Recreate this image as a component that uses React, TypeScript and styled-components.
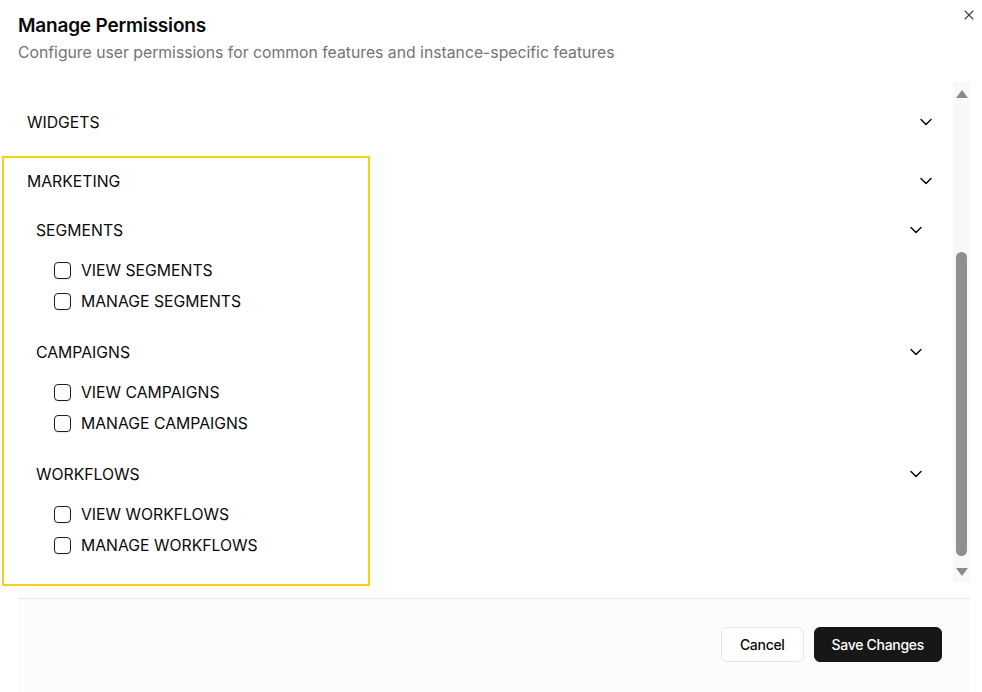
import styled, { createGlobalStyle } from "styled-components";
import { ChevronDown, X } from "lucide-react";

const GlobalStyle = createGlobalStyle`
  html, body {
    margin: 0;
    padding: 0;
    background: #ffffff;
  }
  body {
    font-family: Inter, "Noto Sans", "Liberation Sans", sans-serif;
    color: #0a0a0a;
  }
  * {
    box-sizing: border-box;
  }
`;

const Dialog = styled.div`
  position: relative;
  width: 982px;
  height: 692px;
  padding: 14px 12px 0 18px;
  display: flex;
  flex-direction: column;
  overflow: hidden;
`;

const Header = styled.div`
  display: flex;
  flex-direction: column;
  gap: 5px;
`;

const Title = styled.h2`
  margin: 0;
  font-size: 19px;
  line-height: 24px;
  font-weight: 600;
  letter-spacing: -0.2px;
`;

const Subtitle = styled.p`
  margin: 0;
  font-size: 15.75px;
  line-height: 20px;
  color: #737373;
`;

const CloseButton = styled.button`
  position: absolute;
  top: 6px;
  right: 4px;
  width: 18px;
  height: 18px;
  padding: 0;
  border: none;
  background: none;
  color: #404040;
  display: flex;
  align-items: center;
  justify-content: center;
  cursor: pointer;
`;

const ScrollArea = styled.div`
  margin-top: 19px;
  height: 500px;
  display: flex;
  flex-direction: row;
`;

const List = styled.div`
  flex: 1;
  padding-top: 20px;
  display: flex;
  flex-direction: column;
  gap: 19px;
  overflow: hidden;
`;

const Section = styled.div`
  display: flex;
  flex-direction: column;
`;

const Row = styled.div<{ $sub?: boolean }>`
  height: 40px;
  display: flex;
  align-items: center;
  justify-content: space-between;
  padding: ${(p) => (p.$sub ? "0 27px 0 18px" : "0 17px 0 9px")};
  font-size: 15.75px;
  color: #0a0a0a;
  text-transform: uppercase;
`;

const Groups = styled.div`
  padding-top: 9px;
  display: flex;
  flex-direction: column;
`;

const Items = styled.div`
  padding: 5px 0 15px 36px;
  display: flex;
  flex-direction: column;
`;

const Item = styled.label`
  height: 31px;
  display: flex;
  align-items: center;
  gap: 10px;
  font-size: 15.75px;
  color: #0a0a0a;
`;

const Box = styled.span`
  width: 17px;
  height: 17px;
  border: 1.5px solid #1f1f1f;
  border-radius: 4px;
  background: #ffffff;
  box-shadow: 0 1px 1px rgba(0, 0, 0, 0.08);
`;

const Scrollbar = styled.div`
  width: 17px;
  background: #f8f8f8;
  display: flex;
  flex-direction: column;
  align-items: center;
  justify-content: space-between;
  padding: 8px 0 6px;
`;

const Arrow = styled.div<{ $down?: boolean }>`
  width: 0;
  height: 0;
  border-left: 6px solid transparent;
  border-right: 6px solid transparent;
  ${(p) =>
    p.$down
      ? "border-top: 8px solid #8a8a8a;"
      : "border-bottom: 8px solid #8a8a8a;"}
`;

const Track = styled.div`
  flex: 1;
  width: 100%;
  display: flex;
  flex-direction: column;
  justify-content: flex-end;
  align-items: center;
  padding: 0 0 12px;
`;

const Thumb = styled.div`
  width: 11px;
  height: 304px;
  border-radius: 6px;
  background: #8f8f8f;
`;

const Footer = styled.div`
  margin-top: 16px;
  flex: 1;
  border-top: 1px solid #e8e8e8;
  background: #fcfcfc;
  display: flex;
  justify-content: flex-end;
  align-items: flex-start;
  gap: 10px;
  padding: 28px 28px 0 0;
`;

const Button = styled.button<{ $primary?: boolean }>`
  height: 35px;
  padding: 0 ${(p) => (p.$primary ? "17px" : "18px")};
  border-radius: 6px;
  font-family: Inter, "Noto Sans", "Liberation Sans", sans-serif;
  font-size: 14px;
  font-weight: 500;
  letter-spacing: -0.3px;
  cursor: pointer;
  border: 1px solid ${(p) => (p.$primary ? "#171717" : "#e5e5e5")};
  background: ${(p) => (p.$primary ? "#171717" : "#ffffff")};
  color: ${(p) => (p.$primary ? "#ffffff" : "#0a0a0a")};
`;

const Highlight = styled.div`
  position: absolute;
  left: 2px;
  top: 156px;
  width: 368px;
  height: 430px;
  border: 2px solid #fcd00f;
  pointer-events: none;
`;

const groups = [
  { name: "Segments", items: ["View Segments", "Manage Segments"] },
  { name: "Campaigns", items: ["View Campaigns", "Manage Campaigns"] },
  { name: "Workflows", items: ["View Workflows", "Manage Workflows"] },
];

export default function App() {
  return (
    <>
      <GlobalStyle />
      <Dialog>
        <Header>
          <Title>Manage Permissions</Title>
          <Subtitle>
            Configure user permissions for common features and instance-specific
            features
          </Subtitle>
        </Header>
        <CloseButton aria-label="Close">
          <X size={16} strokeWidth={1.6} />
        </CloseButton>

        <ScrollArea>
          <List>
            <Section>
              <Row>
                <span>Widgets</span>
                <ChevronDown size={20} strokeWidth={1.8} />
              </Row>
            </Section>
            <Section>
              <Row>
                <span>Marketing</span>
                <ChevronDown size={20} strokeWidth={1.8} />
              </Row>
              <Groups>
                {groups.map((g) => (
                  <div key={g.name}>
                    <Row $sub>
                      <span>{g.name}</span>
                      <ChevronDown size={20} strokeWidth={1.8} />
                    </Row>
                    <Items>
                      {g.items.map((it) => (
                        <Item key={it}>
                          <Box />
                          <span>{it.toUpperCase()}</span>
                        </Item>
                      ))}
                    </Items>
                  </div>
                ))}
              </Groups>
            </Section>
          </List>
          <Scrollbar>
            <Arrow />
            <Track>
              <Thumb />
            </Track>
            <Arrow $down />
          </Scrollbar>
        </ScrollArea>

        <Footer>
          <Button>Cancel</Button>
          <Button $primary>Save Changes</Button>
        </Footer>

        <Highlight />
      </Dialog>
    </>
  );
}
